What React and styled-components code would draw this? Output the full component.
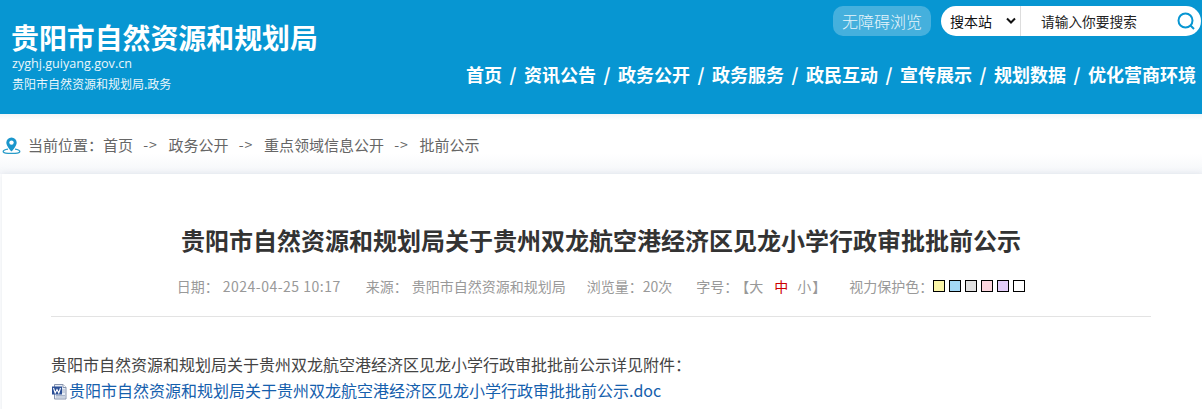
import React from 'react';
import styled, { createGlobalStyle } from 'styled-components';

const Global = createGlobalStyle`
  html, body { margin: 0; padding: 0; background: #fff; overflow: hidden; }
  body { font-family: "Noto Sans CJK SC", "Noto Sans", sans-serif; }
`;
const Page = styled.div`width: 1202px; height: 409px; overflow: hidden; background: #fff;`;
const Header = styled.header`
  height: 114px; background: #0796d2; display: flex; justify-content: space-between; box-sizing: border-box;
  padding: 0 6px 0 11px;
`;
const Brand = styled.div`display: flex; flex-direction: column; padding-top: 19px; color: #fff;`;
const BrandName = styled.div`font-size: 27.9px; line-height: 36px; font-weight: 700;`;
const BrandUrl = styled.div`font-size: 12.6px; line-height: 18px; padding-left: 1px; font-family: "Open Sans", sans-serif; color: #eaf6fb;`;
const BrandSub = styled.div`font-size: 12px; line-height: 18px; margin-top: 2px; padding-left: 1px; color: #eaf6fb;`;
const Right = styled.div`display: flex; flex-direction: column; align-items: flex-end;`;
const Tools = styled.div`display: flex; align-items: center; gap: 10px; margin-top: 6px; margin-right: -5px;`;
const A11y = styled.div`
  width: 98px; height: 30px; border-radius: 10px; background: rgba(255,255,255,.25); color: #e8f5fb;
  font-size: 16px; font-weight: 300; line-height: 30px; text-align: center;
`;
const Search = styled.div`
  width: 260px; height: 30px; border-radius: 15px; background: #fff; display: flex; align-items: center; overflow: hidden;
`;
const Scope = styled.div`
  width: 80px; height: 30px; box-sizing: border-box; border-right: 1px solid #ddd; display: flex; align-items: center;
  justify-content: space-between; padding: 0 4px 0 9px; font-size: 14px; color: #111;
`;
const Placeholder = styled.div`flex: 1; padding-left: 20px; font-size: 13.7px; color: #222;`;
const SearchIcon = styled.svg`width: 20px; height: 20px; margin-right: 5px;`;
const Nav = styled.nav`display: flex; align-items: center; margin-top: 25px; color: #fff; font-size: 18px; font-weight: 700; line-height: 26px;`;
const Sep = styled.span`width: 22px; text-align: center; font-weight: 700;`;
const Crumbs = styled.div`
  height: 60px; display: flex; align-items: center; padding-left: 2px; box-sizing: border-box; color: #666; font-size: 15px;
  background: linear-gradient(#f2f5f7 0, #fff 6px, #fff 40px, #f4f6f9 60px);
`;
const Pin = styled.svg`width: 19px; height: 20px; margin-right: 7px; flex-shrink: 0;`;
const Arrow = styled.span`margin: 0 10.5px 0 10px; width: 15px; text-align: center; font-size: 14px; letter-spacing: 1px; white-space: nowrap;`;
const CrumbItem = styled.span``;
const Card = styled.main`
  margin-left: 2px; padding: 0 51px 0 49px; background: #fff; box-shadow: 0 0 6px rgba(180,190,205,.35); min-height: 300px;
`;
const Title = styled.h1`
  margin: 0; padding-top: 47px; font-size: 24px; line-height: 38px; font-weight: 700; color: #333; text-align: center;
`;
const Meta = styled.div`
  display: flex; align-items: center; justify-content: center; height: 28px; margin-top: 13px; font-size: 14px; color: #999;
  padding-bottom: 16px; border-bottom: 1px solid #e3e3e3;
`;
const MetaItem = styled.span`margin-right: ${p => p.$gap ?? 24}px; white-space: nowrap;`;
const MetaValue = styled.span`margin-left: 4px; letter-spacing: ${p => p.$spaced ? '0.5px' : '0'};`;
const Bracket = styled.span`margin-left: 4px;`;
const Red = styled.span`color: #c00; margin: 0 9px 0 11px;`;
const Small = styled.span`margin-right: 1px;`;
const Swatches = styled.span`display: flex; gap: 4px;`;
const Swatch = styled.span`
  box-sizing: border-box; width: 12px; height: 12px; border: 1px solid #000; background: ${p => p.$c};
`;
const Body = styled.div`padding-top: 34px; font-size: 16px; line-height: 26px; color: #444;`;
const Attach = styled.div`display: flex; align-items: center; color: #1560ad; white-space: nowrap;`;
const DocIcon = styled.svg`width: 17px; height: 17px; margin-top: 3px; margin-right: 1px; flex-shrink: 0;`;

const nav = ['首页','资讯公告','政务公开','政务服务','政民互动','宣传展示','规划数据','优化营商环境'];
const crumbs = ['首页','政务公开','重点领域信息公开','批前公示'];
const colors = ['#faf5a8','#a3d8f6','#e0e0e0','#fcd5de','#e3cdf8','#fff'];

export default function App() {
  return (
    <Page>
      <Global />
      <Header>
        <Brand>
          <BrandName>贵阳市自然资源和规划局</BrandName>
          <BrandUrl>zyghj.guiyang.gov.cn</BrandUrl>
          <BrandSub>贵阳市自然资源和规划局.政务</BrandSub>
        </Brand>
        <Right>
          <Tools>
            <A11y>无障碍浏览</A11y>
            <Search>
              <Scope>搜本站
                <svg width="10" height="8" viewBox="0 0 10 8"><path d="M1 1.5 5 5.5 9 1.5" fill="none" stroke="#111" strokeWidth="2"/></svg>
              </Scope>
              <Placeholder>请输入你要搜索</Placeholder>
              <SearchIcon viewBox="0 0 20 20"><circle cx="9.5" cy="9.5" r="7" fill="none" stroke="#0796d2" strokeWidth="2"/><path d="M14.5 14.5 18 18" stroke="#0796d2" strokeWidth="2"/></SearchIcon>
            </Search>
          </Tools>
          <Nav>
            {nav.map((n,i)=>(<React.Fragment key={n}>{i>0 && <Sep>/</Sep>}<span>{n}</span></React.Fragment>))}
          </Nav>
        </Right>
      </Header>
      <Crumbs>
        <Pin viewBox="0 0 19 20">
          <path d="M6 15.2C3 15.7 1.2 16.6 1.2 17.5c0 1.2 3.7 2 8.3 2s8.3-.8 8.3-2c0-.9-1.8-1.8-4.8-2.3" fill="none" stroke="#2a9cc9" strokeWidth="1.3"/>
          <path d="M9.5 3.5a5.2 5.2 0 0 0-5.2 5.2c0 3.4 5.2 8.8 5.2 8.8s5.2-5.4 5.2-8.8a5.2 5.2 0 0 0-5.2-5.2z" fill="#1a96cc"/>
          <circle cx="9.5" cy="8.6" r="2.2" fill="#fff"/>
        </Pin>
        <CrumbItem>当前位置：</CrumbItem>
        {crumbs.map((c,i)=>(<React.Fragment key={c}>{i>0 && <Arrow>-&gt;</Arrow>}<CrumbItem>{c}</CrumbItem></React.Fragment>))}
      </Crumbs>
      <Card>
        <Title>贵阳市自然资源和规划局关于贵州双龙航空港经济区见龙小学行政审批批前公示</Title>
        <Meta>
          <MetaItem $gap={25}>日期：<MetaValue $spaced>2024-04-25 10:17</MetaValue></MetaItem>
          <MetaItem $gap={21}>来源：<MetaValue>贵阳市自然资源和规划局</MetaValue></MetaItem>
          <MetaItem>浏览量：20次</MetaItem>
          <MetaItem $gap={23}>字号：<Bracket>【</Bracket>大<Red>中</Red><Small>小</Small>】</MetaItem>
          <MetaItem $gap={0}>视力保护色：</MetaItem>
          <Swatches>{colors.map(c=><Swatch key={c} $c={c}/>)}</Swatches>
        </Meta>
        <Body>
          <div>贵阳市自然资源和规划局关于贵州双龙航空港经济区见龙小学行政审批批前公示详见附件：</div>
          <Attach>
            <DocIcon viewBox="0 0 17 17">
              <path d="M3.5 1.5h8.5l3 3v11.5h-11.500z" fill="#e9eef6" stroke="#8794ad"/>
              <path d="M12 1.500v3h3" fill="#fff" stroke="#8794ad"/>
              <path d="M11 7h3M11 9h3M5 12.500h9M5 14h9" stroke="#a8b4c8"/>
              <rect x="1" y="3.500" width="10" height="8" fill="#2b4f96"/>
              <path d="M2.500 5 4.200 10 6 6.500 7.800 10 9.500 5" fill="none" stroke="#fff" strokeWidth="1.100"/>
            </DocIcon>
            贵阳市自然资源和规划局关于贵州双龙航空港经济区见龙小学行政审批批前公示.doc
          </Attach>
        </Body>
      </Card>
    </Page>
  );
}
